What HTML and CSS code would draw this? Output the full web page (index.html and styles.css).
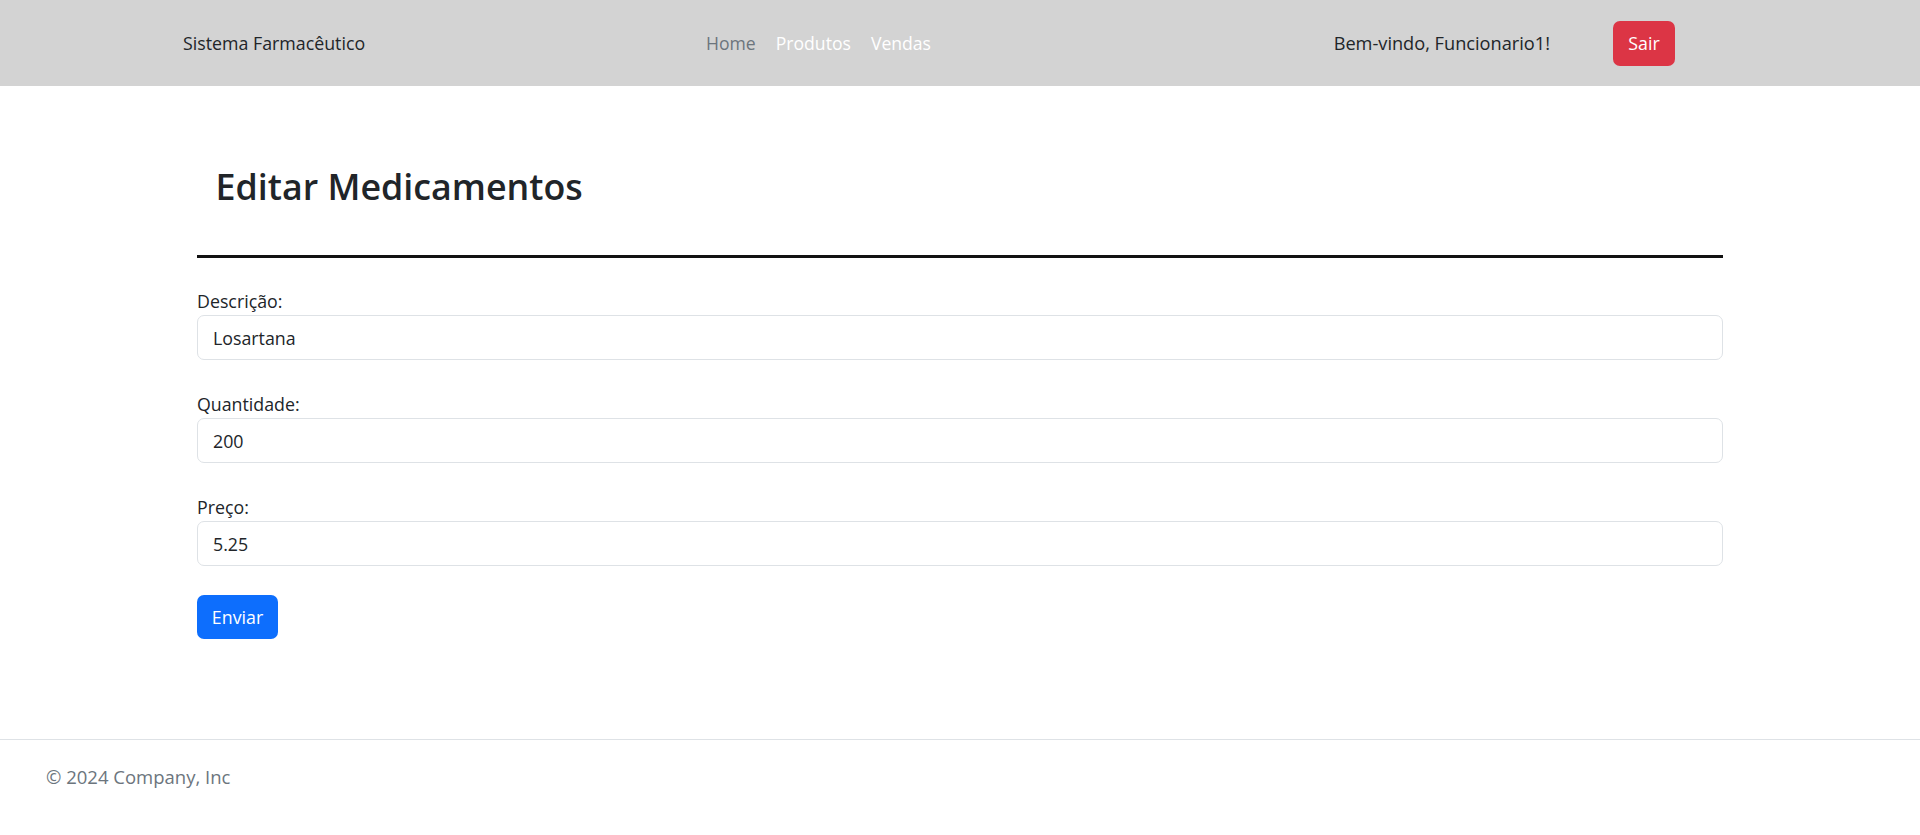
FILE: index.html
```html
<!DOCTYPE html>
<html lang="pt-BR">
<head>
<meta charset="utf-8">
<title>Editar Medicamentos</title>
<link rel="stylesheet" href="styles.css">
</head>
<body>
<header class="navbar">
  <a class="brand" href="#">Sistema Farmacêutico</a>
  <nav class="nav">
    <a class="nav-link active" href="#">Home</a>
    <a class="nav-link" href="#">Produtos</a>
    <a class="nav-link" href="#">Vendas</a>
  </nav>
  <div class="user">
    <span class="welcome">Bem-vindo, Funcionario1!</span>
    <button class="btn btn-danger" type="button">Sair</button>
  </div>
</header>

<main class="container">
  <h1 class="title">Editar Medicamentos</h1>
  <hr class="divider">
  <form class="form">
    <div class="form-group">
      <label class="label" for="descricao">Descrição:</label>
      <input class="input" id="descricao" type="text" value="Losartana">
    </div>
    <div class="form-group">
      <label class="label" for="quantidade">Quantidade:</label>
      <input class="input" id="quantidade" type="text" value="200">
    </div>
    <div class="form-group last">
      <label class="label" for="preco">Preço:</label>
      <input class="input" id="preco" type="text" value="5.25">
    </div>
    <button class="btn btn-primary" type="submit">Enviar</button>
  </form>
</main>

<footer class="footer">
  <p class="copy">© 2024 Company, Inc</p>
</footer>
</body>
</html>
```

FILE: styles.css
```css
* { box-sizing: border-box; }

body {
  margin: 0;
  font-family: "Open Sans", "Noto Sans", sans-serif;
  font-size: 17.8px;
  line-height: 27px;
  color: #212529;
  background: #fff;
}

.navbar {
  height: 86px;
  background: #d3d3d3;
  display: flex;
  align-items: center;
  padding: 0 245px 0 183px;
}

.brand {
  flex: 0 0 513px;
  color: #212529;
  text-decoration: none;
  font-size: 17.8px;
}

.nav {
  display: flex;
}

.nav-link {
  padding: 0 10px;
  color: #fff;
  text-decoration: none;
  font-size: 17.6px;
}

.nav-link.active {
  color: #6c757d;
}

.user {
  margin-left: auto;
  display: flex;
  align-items: center;
}

.welcome {
  font-size: 18.2px;
  margin-right: 63px;
}

.btn {
  height: 44px;
  padding: 0 15px;
  border: none;
  border-radius: 7px;
  color: #fff;
  font-family: inherit;
  font-size: 17.8px;
  line-height: 44px;
  cursor: pointer;
}

.btn-danger {
  background: #dc3545;
  height: 45px;
  width: 62px;
  padding: 0;
}

.btn-primary {
  background: #0d6efd;
  width: 81px;
  padding: 0;
}

.container {
  width: 1526px;
  margin: 0 auto;
  padding-top: 78px;
}

.title {
  margin: 0;
  padding-left: 18.5px;
  font-size: 35.8px;
  line-height: 44px;
  font-weight: 600;
  color: #212529;
}

.divider {
  margin: 47px 0 30px;
  height: 3px;
  border: none;
  background: #111;
}

.form-group {
  margin-bottom: 31px;
}

.form-group.last {
  margin-bottom: 29px;
}

.label {
  display: block;
  line-height: 27px;
}

.input {
  display: block;
  width: 100%;
  height: 45px;
  padding: 0 15px;
  border: 1px solid #dee2e6;
  border-radius: 7px;
  font-family: inherit;
  font-size: 17.8px;
  color: #212529;
  background: #fff;
}

.footer {
  margin-top: 100px;
  border-top: 1px solid #dee2e6;
  padding: 23px 46px 0;
}

.copy {
  margin: 0;
  color: #6c757d;
  font-size: 18.5px;
  line-height: 27px;
}
```
